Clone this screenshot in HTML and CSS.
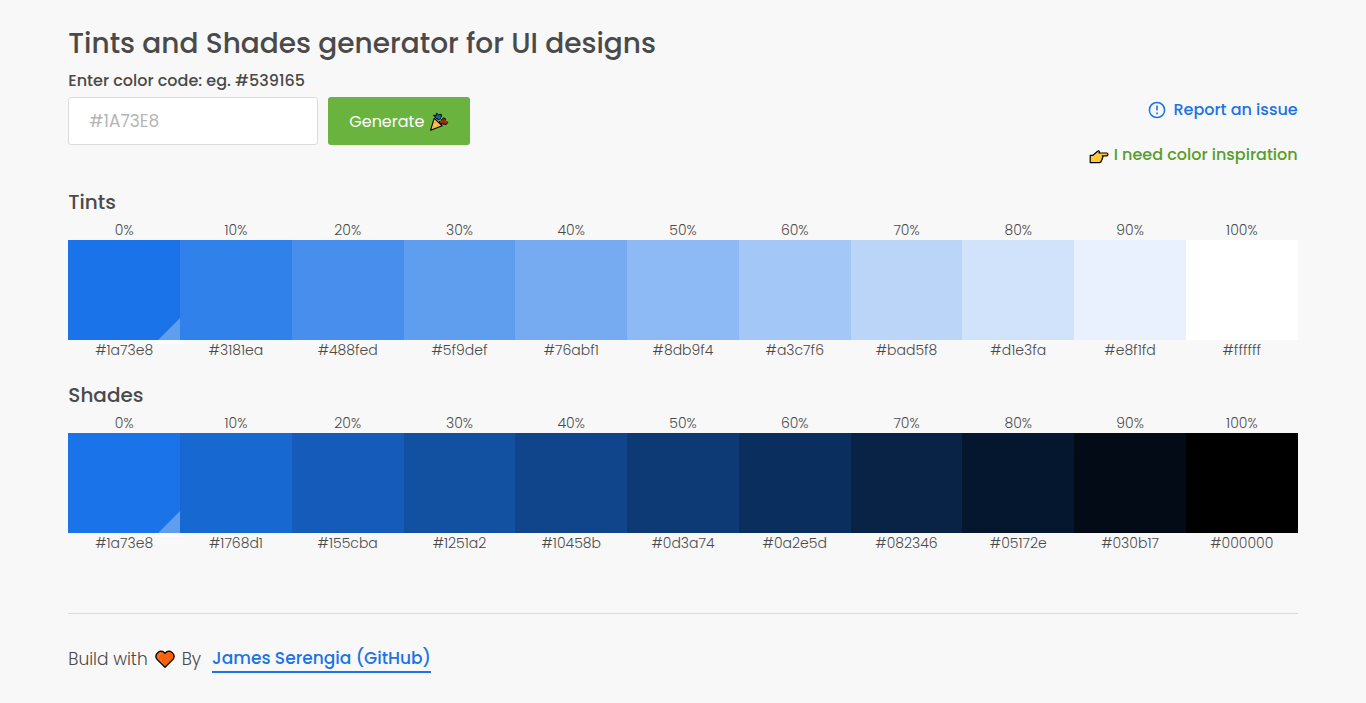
FILE: index.html
```
<!DOCTYPE html>
<html lang="en">
<head>
<meta charset="utf-8">
<title>Tints and Shades generator</title>
<link rel="stylesheet" href="styles.css">
</head>
<body>
<div class="page">
  <header>
    <h1 class="title">Tints and Shades generator for UI designs</h1>
    <div class="toolbar">
      <form class="form">
        <label class="label" for="color">Enter color code: eg. #539165</label>
        <div class="controls">
          <input class="input" id="color" type="text" placeholder="#1A73E8">
          <button class="button" type="button">Generate
            <svg class="party" viewBox="0 0 20 20" aria-hidden="true">
              <path d="M5.2 6.4 1.6 18.2l11.6-4.4z" fill="#ffc152" stroke="#000" stroke-width="1.1" stroke-linejoin="round"/>
              <path d="M4.6 3.2 7 3.8l.6-2.6 2 1.6 2.6-.6.2 3-2 2.6-3.4-1.4-1-1.4z" fill="#086f9e" stroke="#000" stroke-width="1" stroke-linejoin="round"/>
              <path d="m11 8.4 2.4-1 1-1.6 2 1v1.6l2.4 2-1.8 2.2-3.4-.8-1.6.4-1.8-2z" fill="#a52a16" stroke="#000" stroke-width="1" stroke-linejoin="round"/>
              <path d="M10.4 8.2h1.4M12 6h1M16.6 9h1" stroke="#e8d84a"/>
              <path d="m5.4 10.4 1.4 1M8.4 13.4l1 .8M4.4 14.6l1 .6" stroke="#f08a2b"/>
            </svg>
          </button>
        </div>
      </form>
      <nav class="links">
        <a class="link report" href="#report">
          <svg class="alert" viewBox="0 0 18 18" aria-hidden="true"><circle cx="9" cy="9" r="7.6" fill="none" stroke="currentColor" stroke-width="1.5"/><path d="M9 4.6v5M9 11.4v1.8" stroke="currentColor" stroke-width="1.6"/></svg>
          Report an issue</a>
        <a class="link inspire" href="#inspiration">
          <svg class="hand" viewBox="0 0 20 16" aria-hidden="true"><path d="M1.2 6.3H4l4.6-4.1c1.6-.8 2.3.7 1.4 1.8h7.6c1.8 0 1.8 2.8 0 2.8h-4.4c1 .6 1 2-.1 2.4.6 1-.1 2-.8 2.1.2 1.4-.8 2.3-2 2.3H1.2z" fill="#ffc83d" stroke="#000" stroke-width="1.2" stroke-linejoin="round"/></svg>
          I need color inspiration</a>
      </nav>
    </div>
  </header>
  <main>
    <section class="group">
      <h2 class="heading">Tints</h2>
      <div class="row">
        <div class="cell">0%<div class="swatch base" style="background:#1a73e8"></div>#1a73e8</div>
        <div class="cell">10%<div class="swatch" style="background:#3181ea"></div>#3181ea</div>
        <div class="cell">20%<div class="swatch" style="background:#488fed"></div>#488fed</div>
        <div class="cell">30%<div class="swatch" style="background:#5f9def"></div>#5f9def</div>
        <div class="cell">40%<div class="swatch" style="background:#76abf1"></div>#76abf1</div>
        <div class="cell">50%<div class="swatch" style="background:#8db9f4"></div>#8db9f4</div>
        <div class="cell">60%<div class="swatch" style="background:#a3c7f6"></div>#a3c7f6</div>
        <div class="cell">70%<div class="swatch" style="background:#bad5f8"></div>#bad5f8</div>
        <div class="cell">80%<div class="swatch" style="background:#d1e3fa"></div>#d1e3fa</div>
        <div class="cell">90%<div class="swatch" style="background:#e8f1fd"></div>#e8f1fd</div>
        <div class="cell">100%<div class="swatch" style="background:#ffffff"></div>#ffffff</div>
      </div>
    </section>
    <section class="group">
      <h2 class="heading">Shades</h2>
      <div class="row">
        <div class="cell">0%<div class="swatch base" style="background:#1a73e8"></div>#1a73e8</div>
        <div class="cell">10%<div class="swatch" style="background:#1768d1"></div>#1768d1</div>
        <div class="cell">20%<div class="swatch" style="background:#155cba"></div>#155cba</div>
        <div class="cell">30%<div class="swatch" style="background:#1251a2"></div>#1251a2</div>
        <div class="cell">40%<div class="swatch" style="background:#10458b"></div>#10458b</div>
        <div class="cell">50%<div class="swatch" style="background:#0d3a74"></div>#0d3a74</div>
        <div class="cell">60%<div class="swatch" style="background:#0a2e5d"></div>#0a2e5d</div>
        <div class="cell">70%<div class="swatch" style="background:#082346"></div>#082346</div>
        <div class="cell">80%<div class="swatch" style="background:#05172e"></div>#05172e</div>
        <div class="cell">90%<div class="swatch" style="background:#030b17"></div>#030b17</div>
        <div class="cell">100%<div class="swatch" style="background:#000000"></div>#000000</div>
      </div>
    </section>
  </main>
  <footer class="footer">
    <span>Build with</span>
    <svg class="heart" viewBox="0 0 20 18" aria-label="love"><path d="M10 17.2 2 9.4C-1.6 4 5.6-1.8 10 3.4c4.4-5.2 11.6.6 8 6z" fill="#f7630c" stroke="#000" stroke-width="1.3" stroke-linejoin="round"/><path d="M3.6 6.8c0-2 1.3-3 2.6-3M5.5 9.5l1.3 1.6" fill="none" stroke="#ff8a4c" stroke-width="1"/></svg>
    <span>By</span>
    <a class="author" href="#github">James Serengia (GitHub)</a>
  </footer>
</div>
</body>
</html>
```
FILE: styles.css
```
* { box-sizing: border-box; }
body {
  margin: 0;
  background: #f8f8f8;
  color: #4a4a4a;
  font: 400 16px/24px Poppins, Inter, sans-serif;
}
.page { width: 90%; margin: 0 auto; padding: 23px 0 28px; }
.title { margin: 0; font-size: 28px; line-height: 42px; font-weight: 500; }
.toolbar { display: flex; justify-content: space-between; flex-wrap: wrap; padding-top: 4px; }
.label { display: block; margin-bottom: 4px; font-weight: 500; }
.controls { display: flex; gap: 10px; }
.input {
  width: 250px; height: 48px; padding: 0 20px;
  border: 1px solid #dbdbdb; border-radius: 3px; background: #fff;
  font: inherit; font-size: 17px; color: inherit;
}
.input::placeholder { color: #b5b5b5; opacity: 1; }
.button {
  display: flex; align-items: center; justify-content: center; gap: 5px;
  min-width: 142px; height: 48px; padding: 2px 20px 0;
  border: 0; border-radius: 3px; background: #6ab33e;
  color: #fff; font: inherit; cursor: pointer;
}
.party { width: 20px; height: 20px; }
.links { display: flex; flex-direction: column; align-items: flex-end; gap: 21px; padding-top: 29px; }
.link { display: flex; align-items: center; font-weight: 500; text-decoration: none; }
.report { gap: 7px; color: #1a73e8; }
.inspire { gap: 5px; color: #559e2c; }
.alert { width: 18px; height: 18px; }
.hand { width: 20px; height: 16px; margin-top: 4px; }
.group { margin-top: 19px; }
.heading { margin: 0; font-size: 20px; line-height: 32px; font-weight: 500; }
.row { display: grid; grid-template-columns: repeat(11, 1fr); padding-top: 2px; }
.cell { text-align: center; font-size: 14px; line-height: 20px; font-weight: 300; }
.swatch { height: 100px; }
.base { position: relative; }
.base::before {
  content: ""; position: absolute; right: -4px; top: 100%;
  width: 29px; height: 4px;
  background: rgba(255, 255, 255, 0.5);
}
.base::after {
  content: ""; position: absolute; right: 0; bottom: 0;
  width: 22px; height: 22px;
  background: rgba(255, 255, 255, 0.3);
  clip-path: polygon(100% 0, 100% 100%, 0 100%);
}
.footer {
  display: flex; align-items: center; flex-wrap: wrap; gap: 7px;
  margin-top: 60px; padding-top: 31px; border-top: 1px solid #dbdbdb;
  font-size: 17px; font-weight: 300;
}
.heart { width: 20px; height: 18px; }
.author {
  margin-left: 4px; border-bottom: 2px solid #1a73e8;
  color: #1a73e8; font-weight: 500; line-height: 26px; text-decoration: none;
}
```
